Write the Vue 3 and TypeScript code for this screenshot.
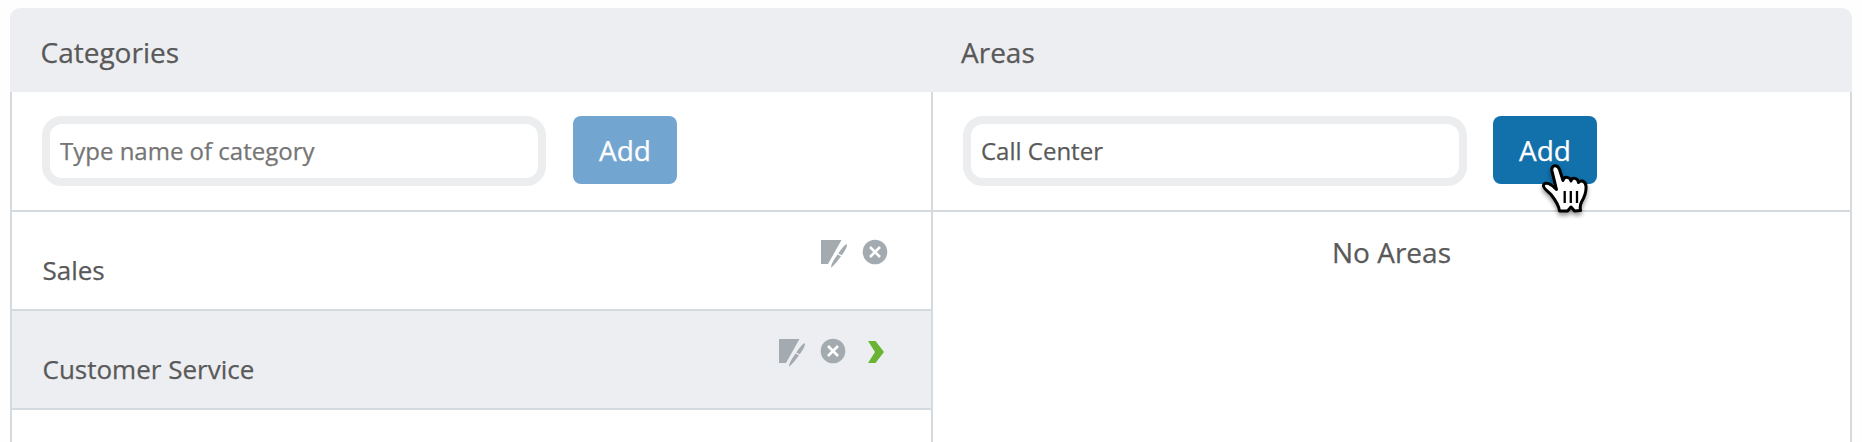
<script setup lang="ts">
import { ref } from 'vue'

interface Category {
  name: string
  selected: boolean
}

const categories: Category[] = [
  { name: 'Sales', selected: false },
  { name: 'Customer Service', selected: true },
]
const categoryName = ref('')
const areaName = ref('Call Center')
</script>

<template>
  <main class="panel">
    <header class="head">
      <h2>Categories</h2>
      <h2>Areas</h2>
    </header>
    <div class="columns">
      <section class="column">
        <form class="entry" @submit.prevent>
          <input v-model="categoryName" type="text" placeholder="Type name of category" />
          <button class="add muted" type="button">Add</button>
        </form>
        <div v-for="c in categories" :key="c.name" class="row" :class="{ selected: c.selected }">
          <span class="name">{{ c.name }}</span>
          <div class="tools">
            <svg class="edit" width="28" height="30" viewBox="0 0 28 30">
              <path d="M1 1H21.500L8 25H1Z" />
              <path d="M26.800 5Q28 8 21.800 16.200L18.300 14.500Q23 7 26.800 5ZM17.600 15.500L21 17.200Q15.500 25 11 28.800Q10.800 24.500 17.600 15.500Z" />
            </svg>
            <svg class="remove" width="26" height="26" viewBox="0 0 26 26">
              <circle cx="13" cy="13" r="12.300" />
              <path d="M8 8L18 18M18 8L8 18" />
            </svg>
            <svg v-if="c.selected" class="open" width="18" height="24" viewBox="0 0 18 24">
              <path d="M1 1H8.500L17 12L8.500 23H1L8 12Z" />
            </svg>
          </div>
        </div>
      </section>
      <section class="column areas">
        <form class="entry" @submit.prevent>
          <input v-model="areaName" type="text" />
          <div class="hovered">
            <button class="add" type="button">Add</button>
            <svg class="pointer" width="60" height="60" viewBox="0 0 60 60">
              <path class="hand" d="M23.500 51C23 45 18.500 39 15 34.500C11.500 31 6.500 28 7.500 25C9 21 15.500 24 20.500 29.500L16 11C14.700 4.500 21.500 4 23.500 9.500L27 20.500C28 16 34 16.500 35 21C36 16.500 42 18 42.500 22.500C45 19.500 49.500 21 50 26C50.500 33 48 38 45.500 42C44 45 44 48 44.500 50.500L38.500 51L35 47L31.500 51Z" />
              <path class="lines" d="M28.700 31V43M34.800 31V43M41 31V43" />
            </svg>
          </div>
        </form>
        <p class="empty">No Areas</p>
      </section>
    </div>
  </main>
</template>

<style>
html,
body {
  margin: 0;
  height: 442px;
  overflow: hidden;
  background: #fefefe;
}
</style>

<style scoped>
* {
  box-sizing: border-box;
}
.panel {
  display: flex;
  flex-direction: column;
  width: 1862px;
  height: 442px;
  padding: 8px 10px 0;
  font-family: "Open Sans", "Noto Sans", sans-serif;
  color: #595959;
  -webkit-text-stroke: 0.25px currentColor;
}
.head {
  display: grid;
  grid-template-columns: 920.5px 1fr;
  flex: none;
  height: 84px;
  padding: 3px 31px 0 30.5px;
  align-items: center;
  border-radius: 10px 10px 0 0;
  background: #edeef2;
}
h2 {
  margin: 0;
  font-size: 28px;
  font-weight: 400;
  line-height: 38px;
}
.columns {
  display: grid;
  grid-template-columns: 923px 1fr;
  flex: 1;
  border: solid #d5dade;
  border-width: 0 2px;
  background: #fff;
}
.columns > .column:first-child {
  width: 921px;
  border-right: 2px solid #d5dade;
}
.column.areas {
  margin-left: -2px;
}
.entry {
  display: flex;
  align-items: flex-start;
  gap: 27px;
  height: 120px;
  padding: 24px 30px 0;
  border-bottom: 2px solid #d5dade;
}
input {
  width: 504px;
  height: 70px;
  padding: 0 10px 2px;
  border: 8px solid #ecedef;
  border-radius: 20px;
  outline: 0;
  background: #fff;
  font: 400 24px/38px "Open Sans", "Noto Sans", sans-serif;
  color: #595959;
}
input::placeholder {
  color: #757575;
}
.areas .entry {
  gap: 26px;
}
.add {
  display: block;
  width: 104px;
  height: 68px;
  padding: 0;
  border: 0;
  border-radius: 8px;
  background: #1270aa;
  color: #fff;
  font: 400 28px/38px "Open Sans", "Noto Sans", sans-serif;
}
.add.muted {
  background: #72a6d1;
}
.hovered {
  position: relative;
}
.pointer {
  position: absolute;
  left: 43px;
  top: 44px;
  filter: drop-shadow(0 3px 2px rgba(0, 0, 0, 0.4));
}
.hand {
  fill: #fff;
  stroke: #000;
  stroke-width: 3;
  stroke-linejoin: round;
}
.lines {
  fill: none;
  stroke: #000;
  stroke-width: 2.3;
}
.row {
  display: flex;
  justify-content: space-between;
  height: 99px;
  padding: 27px 43px 0 30.5px;
  border-bottom: 2px solid #d5dade;
}
.row.selected {
  padding-right: 46px;
  background: #edeef2;
}
.name {
  padding-top: 13px;
  font-size: 26px;
  line-height: 36px;
}
.tools {
  display: flex;
  align-items: flex-start;
  fill: #a3abb0;
}
.remove {
  margin-left: 14px;
}
.remove path {
  fill: none;
  stroke: #fff;
  stroke-width: 2.6;
}
.open {
  margin: 2px 0 0 21px;
  fill: #6ab434;
}
.empty {
  margin: 21px 0 0;
  text-align: center;
  font-size: 28px;
  line-height: 38px;
}
</style>
